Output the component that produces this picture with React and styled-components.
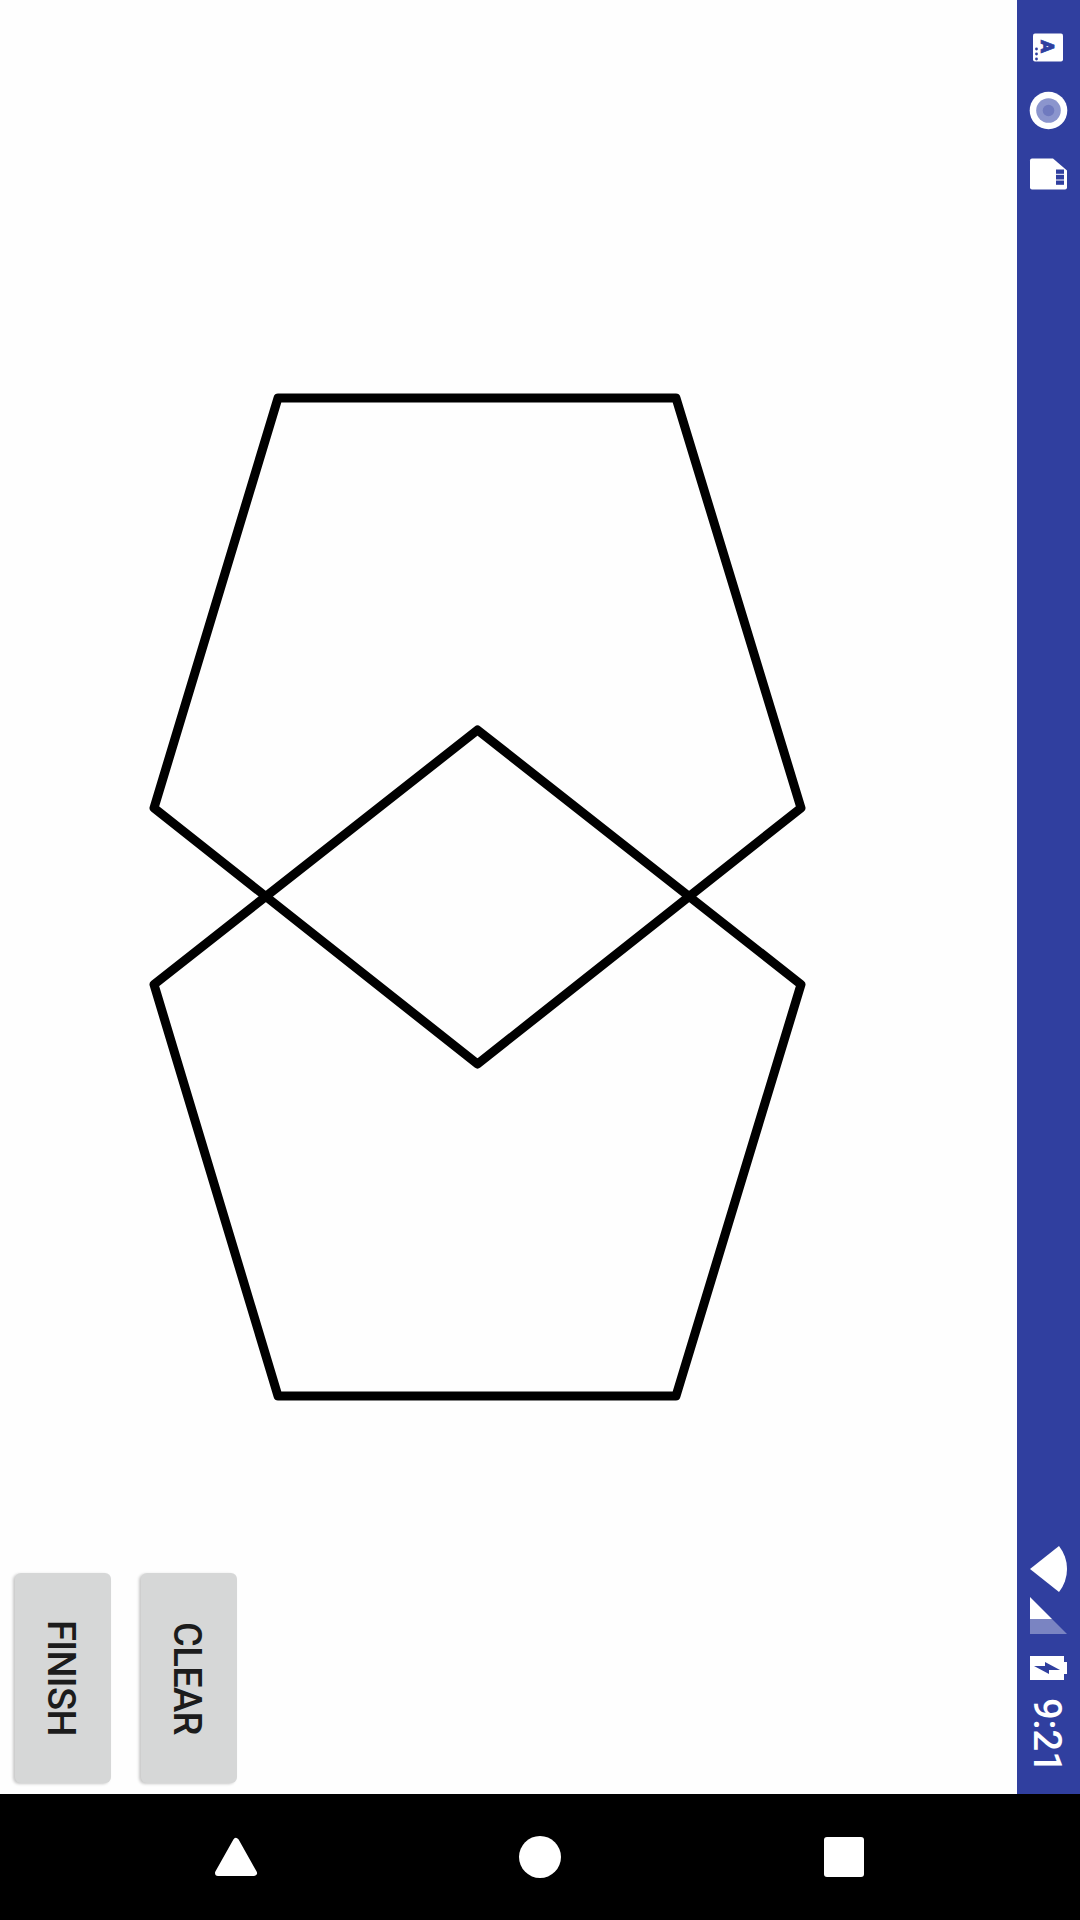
import React from 'react';
import styled, { createGlobalStyle } from 'styled-components';

const INDIGO = '#303f9f';

const GlobalStyle = createGlobalStyle`
  html, body {
    margin: 0;
    padding: 0;
    background: #000;
  }
`;

const Screen = styled.div`
  width: 1080px;
  height: 1920px;
  display: flex;
  flex-direction: column;
  overflow: hidden;
`;

const Main = styled.div`
  flex: 1;
  display: flex;
  min-height: 0;
`;

const Canvas = styled.div`
  flex: 1;
  display: flex;
  flex-direction: column;
  justify-content: space-between;
  background: #fefefe;
`;

const Drawing = styled.svg`
  display: block;
  width: 1017px;
  height: 1500px;
`;

const Actions = styled.div`
  display: flex;
  gap: 30px;
  padding: 0 15px 11px;
`;

const ActionButton = styled.button`
  width: 96px;
  height: 210px;
  padding: 0 4px 0 0;
  display: flex;
  align-items: center;
  justify-content: center;
  border: 0;
  border-radius: 6px;
  background: #d6d7d7;
  box-shadow: -2px 1px 3px rgba(0, 0, 0, 0.22);
  color: #1c1c1c;
  font-family: Roboto, sans-serif;
  font-size: 38px;
  font-weight: 500;
  letter-spacing: -0.6px;
  writing-mode: vertical-rl;
`;

const StatusBar = styled.div`
  width: 63px;
  display: flex;
  flex-direction: column;
  justify-content: space-between;
  background: ${INDIGO};
`;

const StatusGroup = styled.div`
  display: flex;
  flex-direction: column;
  padding-top: ${({ $top }) => $top || 0}px;
  padding-bottom: ${({ $bottom }) => $bottom || 0}px;
`;

const StatusIcon = styled.svg`
  display: block;
  width: 63px;
  height: ${({ $h }) => $h}px;
  margin-bottom: ${({ $after }) => $after || 0}px;
`;

const Clock = styled.div`
  align-self: center;
  padding-right: 3px;
  color: #fff;
  font-family: Roboto, sans-serif;
  font-size: 38px;
  font-weight: 500;
  line-height: 60px;
  writing-mode: vertical-rl;
`;

const NavBar = styled.div`
  height: 126px;
  display: flex;
  align-items: center;
  justify-content: center;
  gap: 240px;
  background: #000;
`;

const NavIcon = styled.svg`
  display: block;
  width: 64px;
  height: 64px;
`;

const App = () => {
  return (
    <Screen>
      <GlobalStyle />
      <Main>
        <Canvas>
          <Drawing viewBox="0 0 1017 1500">
            <g fill="none" stroke="#000" strokeWidth="9" strokeLinejoin="round">
              <polygon points="278,398 676,398 801,808 477.5,1064 154,808" />
              <polygon points="477.5,730 801,984.5 676,1396 278,1396 154,984.5" />
            </g>
          </Drawing>
          <Actions>
            <ActionButton>FINISH</ActionButton>
            <ActionButton>CLEAR</ActionButton>
          </Actions>
        </Canvas>
        <StatusBar>
          <StatusGroup $top={15.5}>
            <StatusIcon $h={63} viewBox="0 0 63 63">
              <rect x="16" y="17.5" width="30" height="28" rx="2" fill="#fff" />
              <text
                x="0"
                y="0"
                transform="translate(24 24) rotate(90)"
                fill={INDIGO}
                stroke={INDIGO}
                strokeWidth="0.8"
                fontFamily="Roboto, sans-serif"
                fontSize="19"
                fontWeight="900"
              >
                A
              </text>
              <circle cx="19.5" cy="33" r="1.4" fill={INDIGO} />
              <circle cx="19.5" cy="38" r="1.4" fill={INDIGO} />
              <circle cx="19.5" cy="43" r="1.4" fill={INDIGO} />
            </StatusIcon>
            <StatusIcon $h={63} viewBox="0 0 63 63">
              <circle cx="31.5" cy="31.5" r="18.8" fill="#fff" />
              <circle cx="31.5" cy="31.5" r="12.3" fill="#8b95cd" />
              <circle cx="31.5" cy="31.5" r="5.8" fill="#6f7abf" />
            </StatusIcon>
            <StatusIcon $h={63} viewBox="0 0 63 63">
              <path d="M15 16.5H36L50 28.5V45.5a2 2 0 0 1-2 2H15a2 2 0 0 1-2-2V18.5a2 2 0 0 1 2-2z" fill="#fff" />
              <rect x="39" y="27.5" width="8" height="4.3" fill={INDIGO} />
              <rect x="39" y="32.8" width="8" height="4.7" fill={INDIGO} />
              <rect x="39" y="38.5" width="8" height="4.3" fill={INDIGO} />
            </StatusIcon>
          </StatusGroup>
          <StatusGroup $bottom={21}>
            <StatusIcon $h={46} $after={5} viewBox="0 0 63 46">
              <path d="M13 23L42 0A37 37 0 0 1 42 46Z" fill="#fff" />
            </StatusIcon>
            <StatusIcon $h={37} $after={22} viewBox="0 0 63 37">
              <polygon points="13,0 13,22 35,22" fill="#fff" />
              <polygon points="13,22 13,37 50,37 35,22" fill="#7a84c2" />
            </StatusIcon>
            <StatusIcon $h={24} $after={18} viewBox="0 0 63 24">
              <path d="M13 0H47V6H50V18H47V24H13Z" fill="#fff" />
              <polygon points="17,10 28,10 28,6 43,14 32,14 32,18" fill={INDIGO} />
            </StatusIcon>
            <Clock>9:21</Clock>
          </StatusGroup>
        </StatusBar>
      </Main>
      <NavBar>
        <NavIcon viewBox="0 0 64 64">
          <path d="M32 16L50 48H14Z" fill="#fff" stroke="#fff" strokeWidth="6" strokeLinejoin="round" />
        </NavIcon>
        <NavIcon viewBox="0 0 64 64">
          <circle cx="32" cy="32" r="21" fill="#fff" />
        </NavIcon>
        <NavIcon viewBox="0 0 64 64">
          <rect x="12" y="12" width="40" height="40" rx="3" fill="#fff" />
        </NavIcon>
      </NavBar>
    </Screen>
  );
};

export default App;
